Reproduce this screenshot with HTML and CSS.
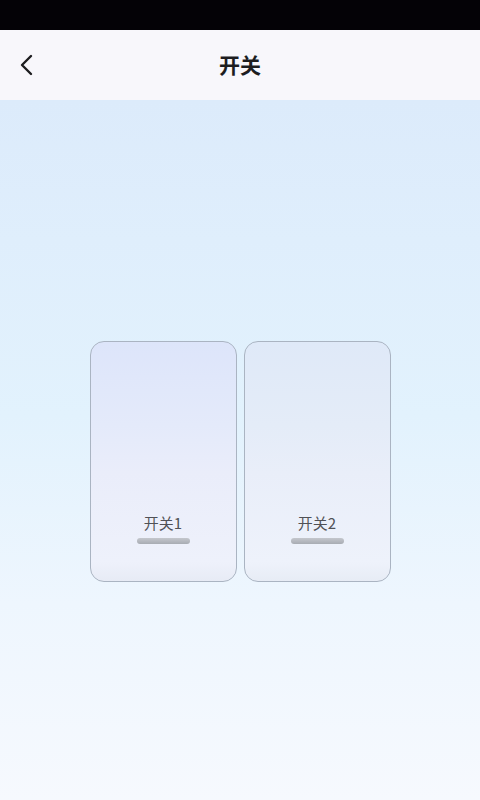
FILE: index.html
```html
<!DOCTYPE html>
<html lang="zh">
<head>
<meta charset="utf-8">
<link rel="stylesheet" href="styles.css">
</head>
<body>
<div class="app">
  <div class="status"></div>
  <header class="nav">
    <svg class="back" width="16" height="24" viewBox="0 0 16 24"><path d="M13 3 L4 12 L13 21" fill="none" stroke="#1d1d1f" stroke-width="2.4" stroke-linecap="round" stroke-linejoin="round"/></svg>
    <h1 class="title">开关</h1>
  </header>
  <main class="body">
    <div class="switches">
      <div class="card">
        <span class="label">开关1</span>
        <span class="bar"></span>
      </div>
      <div class="card card-alt">
        <span class="label">开关2</span>
        <span class="bar"></span>
      </div>
    </div>
  </main>
</div>
</body>
</html>
```
FILE: styles.css
```css
* { box-sizing: border-box; }
html, body { margin: 0; padding: 0; }
body {
  width: 480px;
  height: 800px;
  overflow: hidden;
  font-family: "Noto Sans CJK SC", "Noto Sans", sans-serif;
}
.app {
  display: flex;
  flex-direction: column;
  height: 800px;
}
.status {
  height: 30px;
  background: #040206;
}
.nav {
  position: relative;
  height: 70px;
  background: #f8f7fb;
  display: flex;
  align-items: center;
  justify-content: center;
}
.back {
  position: absolute;
  left: 18px;
  top: 53px;
  top: 23px;
}
.title {
  margin: 0 0 2px;
  font-size: 21px;
  font-weight: 700;
  color: #1d1d1f;
  line-height: 1;
}
.body {
  flex: 1;
  background: linear-gradient(to bottom, #dcebfb 0%, #dfeefc 20%, #e2f2fd 45%, #eef6fe 72%, #f6f9fe 100%);
  padding-top: 241px;
}
.switches {
  display: flex;
  justify-content: center;
  gap: 7px;
}
.card {
  width: 147px;
  height: 241px;
  border: 1px solid #aab4c2;
  border-radius: 14px;
  background: linear-gradient(to bottom, #dde5fa 0%, #e4eafa 35%, #eaedfa 55%, #eef1fb 92%, #e7ebf5 100%);
  display: flex;
  flex-direction: column;
  align-items: center;
  justify-content: flex-end;
  padding-bottom: 37px;
}
.card-alt {
  background: linear-gradient(to bottom, #dfe9f8 0%, #e4ecf8 35%, #e9eef9 55%, #eef2fb 92%, #e7ecf5 100%);
}
.label {
  font-size: 15px;
  color: #505156;
  line-height: 20px;
  margin-bottom: 5px;
}
.bar {
  width: 53px;
  height: 6px;
  border-radius: 3px;
  background: linear-gradient(to bottom, #c4c7cd, #a8acb3);
}
```
